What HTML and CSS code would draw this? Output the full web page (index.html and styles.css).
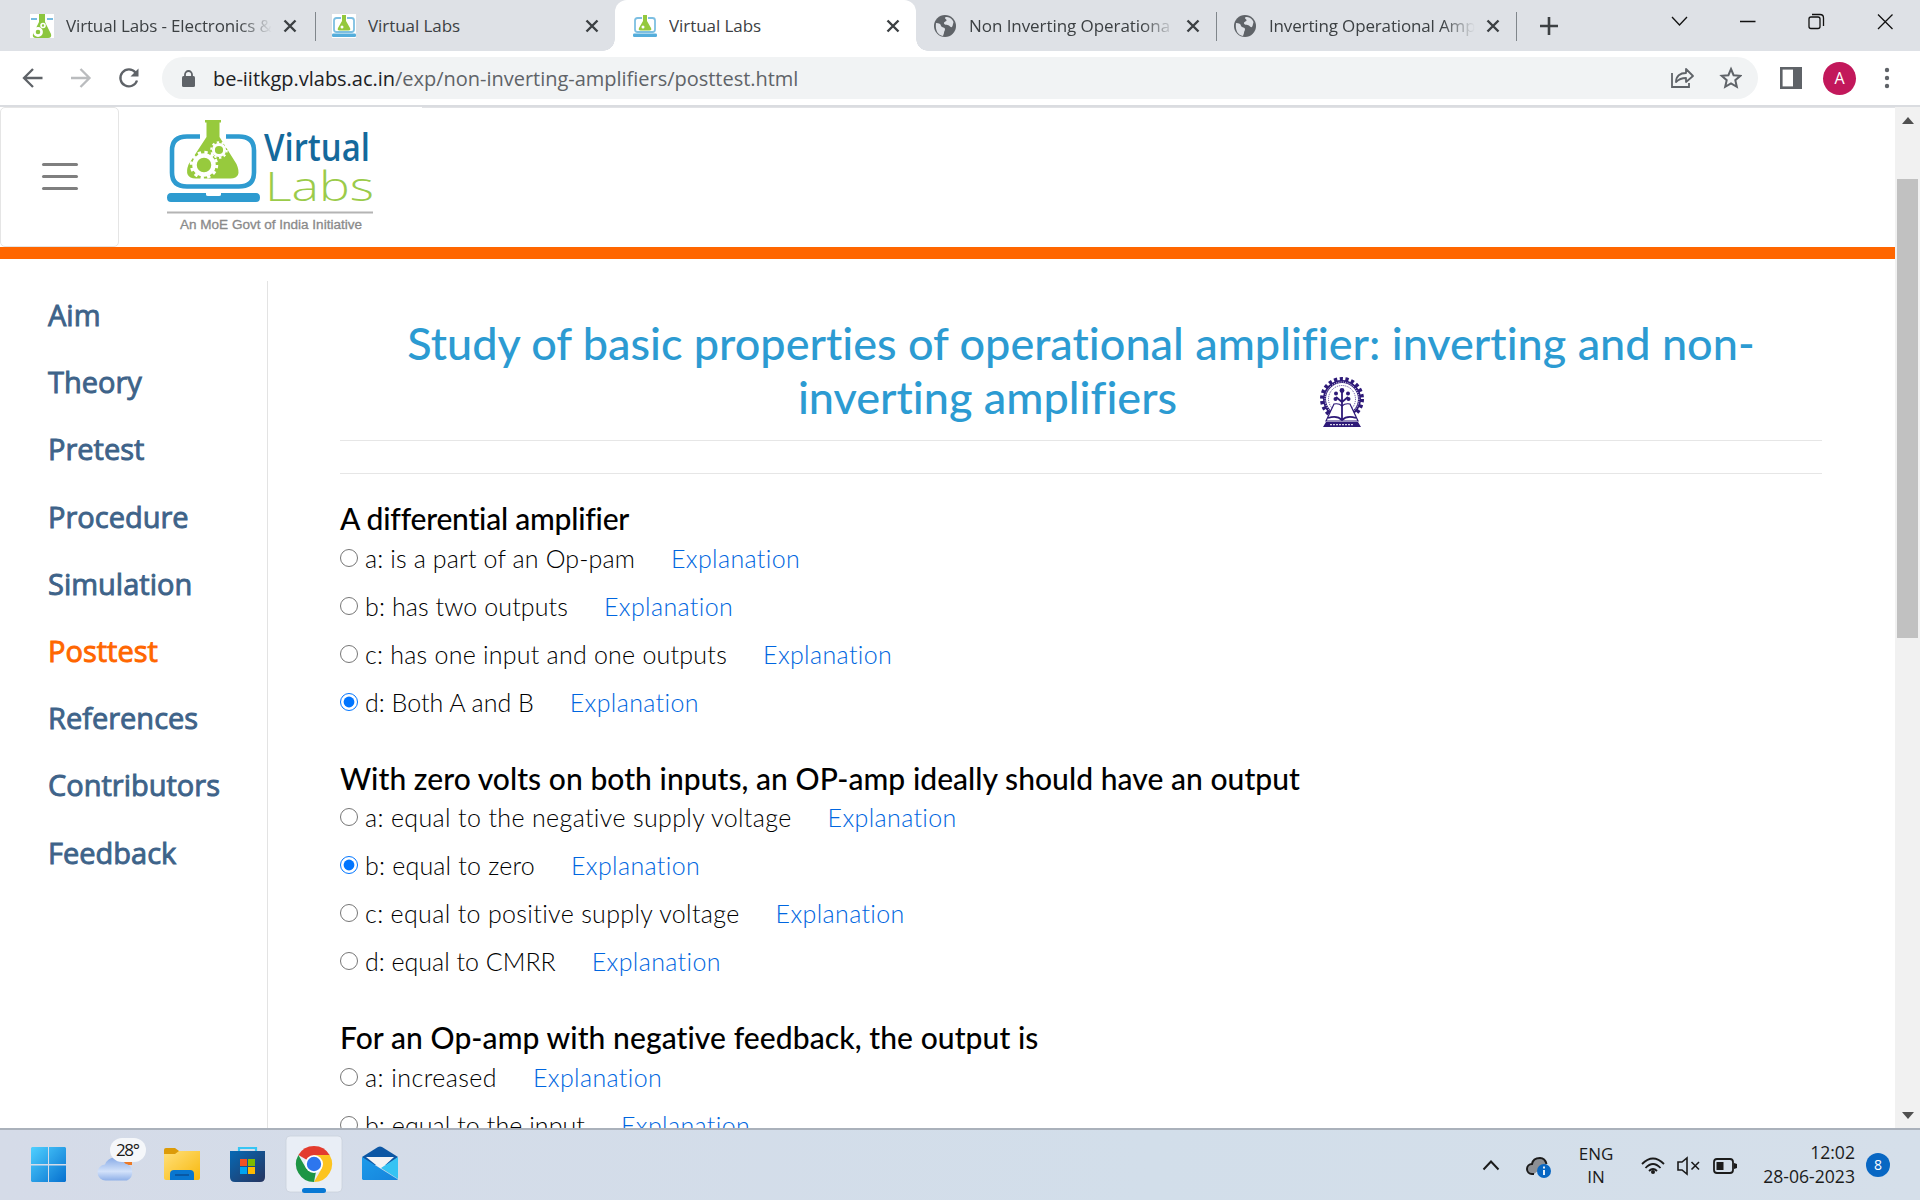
FILE: index.html
```html
<!DOCTYPE html>
<html lang="en">
<head>
<meta charset="utf-8">
<title>Virtual Labs</title>
<link rel="stylesheet" href="styles.css">
</head>
<body>
<svg class="defs" width="0" height="0">
  <symbol id="x" viewBox="0 0 14 14"><path d="M1.500 1.500l11 11M12.500 1.500l-11 11" stroke="#3c4043" stroke-width="2.400" fill="none"/></symbol>
  <symbol id="globe" viewBox="0 0 24 24"><circle cx="12" cy="12" r="11" fill="#5f6368"/><path d="M3 9c3 0 5 1 5 3 1 2 4 1 4 3s-1 2-1 4l-1 3C5 21 2 17 3 9zM12 3.500c4-1.500 7 1.500 8.500 4.500l-1 4c-1 2-2 1-3 0-1-1.500-5-.5-5.500-2.500s3-2 2.500-3.500-2-1-1.500-2.500z" fill="#dee1e6"/></symbol>
  <symbol id="flask" viewBox="0 0 24 24"><rect width="24" height="24" fill="#fff"/><path d="M1 5h6M17 5h6" stroke="#4aa5d6" stroke-width="1.500"/><path d="M9 0h6v8l6 12q1 4-3 4H6q-4 0-3-4L9 8z" fill="#8cc63f"/><circle cx="8" cy="18" r="3.600" fill="#8cc63f" stroke="#fff" stroke-width="2.600"/><circle cx="13" cy="11.500" r="2" fill="#8cc63f" stroke="#fff" stroke-width="1.600"/></symbol>
  <symbol id="vl" viewBox="0 0 24 24"><rect width="24" height="24" fill="#fff"/><path d="M9 4H4.500Q2 4 2 6.500v9Q2 18 4.500 18h15q2.500 0 2.500-2.500v-9Q22 4 19.500 4H15" fill="none" stroke="#7dbfe2" stroke-width="1.800"/><path d="M10 1h4v6l4 7q1 2.500-1.500 2.500h-9Q5 16.500 6 14l4-7z" fill="#94c83d"/><circle cx="10" cy="13" r="1.500" fill="#fff"/><rect x="0" y="19.500" width="24" height="3.500" rx="1.200" fill="#54addb"/></symbol>
</svg>

<header class="tabs">
  <div class="tab first"><svg class="fav"><use href="#flask"/></svg><span class="tt fade">Virtual Labs - Electronics &amp;</span><svg class="cl"><use href="#x"/></svg></div>
  <div class="tab second"><svg class="fav"><use href="#vl"/></svg><span class="tt">Virtual Labs</span><svg class="cl"><use href="#x"/></svg></div>
  <div class="tab active"><svg class="fav"><use href="#vl"/></svg><span class="tt">Virtual Labs</span><svg class="cl"><use href="#x"/></svg></div>
  <div class="tab fourth"><svg class="fav"><use href="#globe"/></svg><span class="tt fade">Non Inverting Operationa</span><svg class="cl"><use href="#x"/></svg></div>
  <div class="tab fifth"><svg class="fav"><use href="#globe"/></svg><span class="tt fade">Inverting Operational Amp</span><svg class="cl"><use href="#x"/></svg></div>
  <svg class="plus" viewBox="0 0 18 18"><path d="M9 0v18M0 9h18" stroke="#3c4043" stroke-width="2.600"/></svg>
  <svg class="win" viewBox="0 0 240 40" fill="none" stroke="#111" stroke-width="1.300"><path d="M12 17l7.500 8 7.500-8M80 21.500h15.500M218 14.500l14.500 14.500M232.500 14.500l-14.500 14.500"/><rect x="149" y="17" width="11" height="11.500" rx="2"/><path d="M152 14.500h8q3.500 0 3.500 3.500v8"/></svg>
</header>

<div class="toolbar">
  <svg class="nav" viewBox="0 0 130 26" fill="none" stroke="#5f6368" stroke-width="2.300"><path d="M22.500 13H4.500M13 4L4 13l9 9"/><path d="M51 13h18M60.500 4l9 9-9 9" stroke="#babcbe"/><path d="M115.500 7.500a8.500 8.500 0 1 0 1.500 8"/><path d="M118.500 3.500v8h-8z" fill="#5f6368" stroke="none"/></svg>
  <div class="omni">
    <svg class="lock" viewBox="0 0 13 17"><rect x="0" y="6" width="13" height="11" rx="1.500" fill="#5f6368"/><path d="M3 7V4.500a3.500 3.500 0 0 1 7 0V7" fill="none" stroke="#5f6368" stroke-width="1.800"/></svg>
    <span class="url"><b>be-iitkgp.vlabs.ac.in</b>/exp/non-inverting-amplifiers/posttest.html</span>
    <svg class="oi" viewBox="0 0 72 24" fill="none" stroke="#5f6368" stroke-width="1.800"><path d="M2 7v14h17v-4"/><path d="M6 16c0-6 4-9 10-9V3l7 7-7 6v-4c-4 0-7 1-10 4z" stroke-linejoin="round"/><path d="M61 3l2.600 6.200 6.700.6-5 4.400 1.500 6.600-5.800-3.500-5.800 3.500 1.500-6.600-5-4.400 6.700-.6z" stroke-width="2"/></svg>
  </div>
  <svg class="panel" viewBox="0 0 22 22"><rect x="1.300" y="1.300" width="19.400" height="19.400" fill="#fff" stroke="#5f6368" stroke-width="2.600"/><rect x="13" y="0" width="9" height="22" fill="#5f6368"/></svg>
  <div class="ava">A</div>
  <svg class="dots" viewBox="0 0 6 22" fill="#5f6368"><circle cx="3" cy="3" r="2.200"/><circle cx="3" cy="11" r="2.200"/><circle cx="3" cy="19" r="2.200"/></svg>
</div>

<div class="view">
  <div class="page">
    <div class="head">
      <div class="burger"><span></span><span></span><span></span></div>
      <svg class="logo" viewBox="160 108 220 130">
        <path d="M200 136.500h-13q-15 0-15 14v22q0 14 15 14h52q15 0 15-14v-22q0-14-15-14h-13" fill="none" stroke="#2e9bd0" stroke-width="4.600"/>
        <path d="M205 120h16v2.500h-1.500V137l17 27q6 14-6 14.500h-35q-12-.5-7-14l18-27.500v-14.500H205z" fill="#97ca3d"/>
        <circle cx="204" cy="165" r="9.500" fill="none" stroke="#fff" stroke-width="4.500"/><circle cx="204" cy="165" r="12.700" fill="none" stroke="#fff" stroke-width="3" stroke-dasharray="3.300 3.350"/>
        <circle cx="219" cy="150" r="5.600" fill="none" stroke="#fff" stroke-width="3"/><circle cx="219" cy="150" r="7.800" fill="none" stroke="#fff" stroke-width="2" stroke-dasharray="2.400 2.500"/>
        <path d="M171 193h35v1.500q0 1.500 2 1.500h11q2 0 2-1.500V193h35q4 0 4 4.500t-4 4.500h-85q-4 0-4-4.500t4-4.500z" fill="#2e9bd0"/>
        <text x="264" y="160.500" textLength="106" lengthAdjust="spacingAndGlyphs" class="lv">Virtual</text>
        <text x="265" y="201" textLength="109" lengthAdjust="spacingAndGlyphs" class="ll">Labs</text>
        <path d="M167 212.500h206" stroke="#b4b4b4" stroke-width="2"/>
        <text x="180" y="228.500" textLength="182" lengthAdjust="spacingAndGlyphs" class="lm">An MoE Govt of India Initiative</text>
      </svg>
      <div class="rule"></div>
    </div>
    <div class="body">
      <nav class="side">
        <a>Aim</a><a>Theory</a><a>Pretest</a><a>Procedure</a><a>Simulation</a><a class="on">Posttest</a><a>References</a><a>Contributors</a><a>Feedback</a>
      </nav>
      <main>
        <h1><span class="l">Study of basic properties of operational amplifier: inverting and non-</span><span class="l"><span>inverting amplifiers</span>
          <svg class="emb" viewBox="0 0 44 50" fill="none" stroke="#2e1a78"><circle cx="22" cy="22" r="20" stroke-width="4" stroke-dasharray="3.200 2.510"/><circle cx="22" cy="22" r="17.500" stroke-width="3"/><circle cx="22" cy="22" r="17" stroke="#fff" stroke-width="1" stroke-dasharray="1 1.300"/><circle cx="22" cy="22" r="13.500" stroke-width=".8" stroke-dasharray="1 1"/><path d="M6 44l8-17q5-1 8 2 3-3 8-2l8 17z" fill="#fff" stroke-width="1.200"/><path d="M22 42V15M22 25l-6-5M22 25l6-5M8 41q9-3 14 2 5-5 14-2" stroke-width="1.800"/><g fill="#2e1a78" stroke="none"><circle cx="22" cy="13.500" r="2.400"/><circle cx="16" cy="16.500" r="2"/><circle cx="28" cy="16.500" r="2"/><circle cx="15.500" cy="22" r="2"/><circle cx="28.500" cy="22" r="2"/><path d="M6 45h32l3 5H3z"/></g><path d="M10 47.700h24" stroke="#fff" stroke-dasharray="2 1"/></svg></span></h1>
        <hr><hr class="h2">
        <section><h2 style="letter-spacing:-.22px">A differential amplifier</h2>
          <label><input type="radio"><span style="letter-spacing:.135px">a: is a part of an Op-pam</span><a>Explanation</a></label>
          <label><input type="radio"><span style="letter-spacing:.108px">b: has two outputs</span><a>Explanation</a></label>
          <label><input type="radio"><span style="letter-spacing:.236px">c: has one input and one outputs</span><a>Explanation</a></label>
          <label><input type="radio" checked><span>d: Both A and B</span><a>Explanation</a></label></section>
        <section><h2 style="letter-spacing:.051px">With zero volts on both inputs, an OP-amp ideally should have an output</h2>
          <label><input type="radio"><span style="letter-spacing:.36px">a: equal to the negative supply voltage</span><a>Explanation</a></label>
          <label><input type="radio" checked><span style="letter-spacing:.203px">b: equal to zero</span><a>Explanation</a></label>
          <label><input type="radio"><span style="letter-spacing:.345px">c: equal to positive supply voltage</span><a>Explanation</a></label>
          <label><input type="radio"><span>d: equal to CMRR</span><a>Explanation</a></label></section>
        <section><h2 style="letter-spacing:.076px">For an Op-amp with negative feedback, the output is</h2>
          <label><input type="radio"><span style="letter-spacing:.441px">a: increased</span><a>Explanation</a></label>
          <label><input type="radio"><span style="letter-spacing:.08px">b: equal to the input</span><a>Explanation</a></label></section>
      </main>
    </div>
  </div>
  <div class="scroll"><i class="up"></i><div class="thumb"></div><i class="down"></i></div>
</div>

<footer class="task">
  <svg class="apps" viewBox="0 1130 420 70">
    <defs>
      <linearGradient id="w" x1="0" y1="0" x2="1" y2="1"><stop offset="0" stop-color="#4fd0ff"/><stop offset="1" stop-color="#0670cf"/></linearGradient>
      <linearGradient id="c" x1="0" y1="0" x2="0" y2="1"><stop offset="0" stop-color="#88abe6"/><stop offset=".6" stop-color="#d3e2fa"/><stop offset="1" stop-color="#8fb0e8"/></linearGradient>
      <linearGradient id="f" x1="0" y1="0" x2="1" y2="1"><stop offset="0" stop-color="#ffe07a"/><stop offset="1" stop-color="#f8b80d"/></linearGradient>
      <linearGradient id="s" x1="0" y1="0" x2="1" y2="1"><stop offset="0" stop-color="#0669b5"/><stop offset="1" stop-color="#26345f"/></linearGradient>
      <linearGradient id="l" x1="0" y1="0" x2="1" y2="1"><stop offset="0" stop-color="#1d9bea"/><stop offset="1" stop-color="#1684dc"/></linearGradient>
    </defs>
    <path d="M32 1147h16v17H31v-16zM49 1147h16l1 1v16H49zM31 1165.500h17v16.500H32l-1-1zM49 1165.500h17v15.500l-1 1H49z" fill="url(#w)"/>
    <path d="M118 1158h14v7h-6z" fill="#ec7a26"/><path d="M106 1180.500a8 8 0 0 1-1-16 11 11 0 0 1 20-1 9 9 0 0 1 2 17z" fill="url(#c)"/>
    <rect x="110" y="1138" width="36" height="24" rx="12" fill="#f5f7fa"/><text x="116" y="1156" textLength="24" class="deg">28°</text>
    <path d="M164 1150q0-2 2-2h9l4 3v7h-15z" fill="#dc9b08"/><path d="M164 1154h11l4-3h21v27q0 2-2 2h-32q-2 0-2-2z" fill="url(#f)"/><path d="M170 1180v-6q0-4 4-4h16q4 0 4 4v6z" fill="#0876d0"/><path d="M175 1175h14" stroke="#084f96" stroke-width="1.500"/>
    <path d="M239 1153v-5h17v5" fill="none" stroke="#36c5f4" stroke-width="2.200"/><path d="M230 1151h35v26q0 5-5 5h-25q-5 0-5-5z" fill="url(#s)"/><path d="M240 1159h7v7h-7z" fill="#f25022"/><path d="M248 1159h7v7h-7z" fill="#7fba00"/><path d="M240 1167h7v7h-7z" fill="#00a4ef"/><path d="M248 1167h7v7h-7z" fill="#ffb900"/>
    <rect x="286" y="1136" width="56" height="56" rx="4" fill="#e9eef6" stroke="#c9d1dc" stroke-width=".8"/>
    <path d="M314 1164L298.400 1155A18 18 0 0 1 329.600 1155z" fill="#e33b2e"/><path d="M314 1155h15.600A18 18 0 0 1 314 1182l8-14z" fill="#fcc420"/><path d="M298.400 1155l7.800 13.500 9.800 3-2 10.500a18 18 0 0 1-15.600-27z" fill="#1e9545"/><circle cx="314" cy="1164" r="9" fill="#fff"/><circle cx="314" cy="1164" r="7.200" fill="#2d76ee"/>
    <rect x="302" y="1188" width="24" height="5" rx="2.500" fill="#0878d4"/>
    <path d="M362 1157l16-10q2-1 4 0l16 10-9 8h-18z" fill="#0d57a4"/><path d="M366 1157h28l-13 12z" fill="#f3f3f5"/><path d="M398 1157v22l-17-11z" fill="#35c3f3"/><path d="M362 1157l36 22.500-1 .5h-34l-1-1z" fill="url(#l)"/>
  </svg>
  <div class="grow"></div>
  <svg class="t1" viewBox="1480 1145 72 36" fill="none" stroke="#1b1b1b" stroke-width="2"><path d="M1483.500 1167.500l7.500-8 7.500 8"/><path d="M1534 1172h-2a5 5 0 0 1 0-10q1-6 8-6 5 0 6.500 6" fill="#8c8f94"/><circle cx="1544" cy="1169" r="7" fill="#0867c3" stroke="none"/><path d="M1544 1168v5M1544 1164.500v2" stroke="#fff" stroke-width="1.800"/></svg>
  <div class="lang">ENG<br>IN</div>
  <svg class="t2" viewBox="1640 1150 100 26" fill="none" stroke="#1b1b1b" stroke-width="1.800"><path d="M1642 1162q11-11 22 0M1645.500 1166q7.500-8 15 0M1649 1169q4-4 8 0"/><circle cx="1653" cy="1170" r="2" fill="#1b1b1b" stroke="none"/><path d="M1678 1160h4l5-4v16l-5-4h-4zM1691.500 1160l7.500 7.500M1699 1160l-7.500 7.500" stroke-width="1.600"/><rect x="1714" y="1157" width="19" height="14" rx="3"/><path d="M1716.500 1160h7v8h-7zM1734 1161l3 1v4l-3 1z" fill="#1b1b1b" stroke="none"/></svg>
  <div class="clock">12:02<br>28-06-2023</div>
  <div class="cnt">8</div>
</footer>
</body>
</html>
```
FILE: styles.css
```css
*{box-sizing:border-box}
body{margin:0;width:1920px;height:1200px;overflow:hidden;display:flex;flex-direction:column;background:#fff;font-family:"Open Sans","Noto Sans",sans-serif}
.defs{position:absolute}
svg{display:block;flex:none}
.tabs{height:51px;background:#dee1e6;display:flex;align-items:center;flex:none}
.tab{display:flex;align-items:center;height:51px;position:relative;flex:none}
.first{width:316px;padding-left:30px}
.second{width:299px;padding-left:16px}
.active{width:301px;padding-left:18px;background:#fff;border-radius:12px 12px 0 0}
.active::before,.active::after{content:"";position:absolute;bottom:0;width:12px;height:12px}
.active::before{left:-12px;background:radial-gradient(circle at 0 0,transparent 11.5px,#fff 12px)}
.active::after{right:-12px;background:radial-gradient(circle at 100% 0,transparent 11.5px,#fff 12px)}
.fourth{width:301px;padding-left:17px}
.fifth{width:300px;padding-left:16px}
.first::after,.fourth::after,.fifth::after{content:"";position:absolute;right:0;top:12px;width:1px;height:29px;background:#80868b}
.fav{width:24px;height:24px}
.tt{margin-left:12px;width:206px;font-size:17px;line-height:24px;letter-spacing:-.06px;color:#3c4043;white-space:nowrap;overflow:hidden}
.first .tt{letter-spacing:-.14px}
.fifth .tt{letter-spacing:-.15px}
.fade{-webkit-mask-image:linear-gradient(90deg,#000 84%,transparent);mask-image:linear-gradient(90deg,#000 84%,transparent)}
.cl{width:14px;height:14px;margin-left:11px}
.plus{width:18px;height:18px;margin-left:23px}
.win{width:240px;height:40px;margin:-11px 0 0 102px}
.toolbar{height:56px;border-bottom:2px solid #dadce0;display:flex;align-items:center;flex:none}
.nav{width:130px;height:26px;margin-left:20px}
.omni{width:1596px;height:42px;margin-left:12px;border-radius:21px;background:#f1f3f4;display:flex;align-items:center;flex:none}
.lock{width:13px;height:17px;margin-left:20px}
.url{margin-left:18px;width:1457px;font-size:20px;letter-spacing:-.02px;color:#5f6368;white-space:nowrap}
.url b{font-weight:400;color:#202124}
.oi{width:72px;height:24px}
.panel{width:22px;height:22px;margin-left:22px}
.ava{width:33px;height:33px;margin-left:21px;border-radius:50%;background:#c2185b;color:#fff;font-size:16px;line-height:33px;text-align:center}
.dots{width:6px;height:22px;margin-left:28px}
.view{height:1021px;display:flex;flex:none}
.page{width:1895px;overflow:hidden}
.head{height:152px;border-bottom:12px solid #f60;display:flex}
.burger{width:119px;height:140px;border:1px solid #e5e5e5;border-radius:5px;padding-bottom:2px;display:flex;flex-direction:column;align-items:center;justify-content:center;gap:9px}
.burger span{width:36px;height:3px;border-radius:2px;background:#7f7f7f}
.logo{width:220px;height:130px;margin:1px 0 0 41px}
.lv{font:600 37px "Open Sans",sans-serif;fill:#14699c}
.ll{font:300 40px "Open Sans",sans-serif;fill:#9bcb4a}
.lm{font:12.5px "Liberation Sans",sans-serif;fill:#8a8a8a;stroke:#8a8a8a;stroke-width:.3px}
.rule{flex:1;height:1px;margin-left:42px;background:#e1e2e5}
.body{display:flex;height:869px}
.side{width:268px;margin-top:22px;border-right:1px solid #e3e3e3;padding-left:48px;display:flex;flex-direction:column;flex:none}
.side a{height:67.2px;line-height:67.2px;font-size:29px;color:#3e6389;-webkit-text-stroke:.9px currentColor;white-space:nowrap}
.side .on{color:#f60}
main{width:1482px;margin-left:72px;padding-top:57px;font-family:Lato,"Open Sans",sans-serif;font-variant-ligatures:none}
h1{margin:0;height:107px;font-size:45px;line-height:54px;font-weight:500;color:#2c9bd2}
.l{display:flex;justify-content:center;height:54px;white-space:nowrap}
.emb{width:44px;height:50px;margin:7px 0 0 143px}
hr{border:0;height:1px;background:#e6e6e6;margin:17px 0 32px}
hr.h2{margin:0 0 26px}
section{height:259.5px}
h2{margin:0;height:33.5px;font-size:30px;line-height:36px;font-weight:500;color:#000;white-space:nowrap}
label{display:flex;align-items:center;height:48px;font-size:25px;font-weight:300;color:#000;white-space:nowrap}
label input{width:18px;height:18px;margin:0 7px 0 0;flex:none;accent-color:#0075ff}
label a{margin-left:36px;letter-spacing:.36px;color:#0066e0}
.scroll{width:25px;background:#f1f1f1;display:flex;flex-direction:column;align-items:center}
.up,.down{width:0;height:0;border:6px solid transparent}
.up{border-bottom-color:#505050;border-top:0;border-bottom-width:7px;margin-top:10px}
.thumb{width:21px;height:459px;margin-top:55px;background:#c1c1c1}
.down{border-top-color:#505050;border-bottom:0;border-top-width:7px;margin-top:474px}
.task{height:72px;border-top:2px solid #aab1bb;background:linear-gradient(90deg,#d5dbe8,#d2deea 60%,#d5dfea);display:flex;align-items:center;color:#1b1b1b;font-size:17px;line-height:23px}
.apps{width:420px;height:70px}
.deg{font:17px "Open Sans",sans-serif;fill:#1b1b1b}
.grow{flex:1}
.t1{width:72px;height:36px}
.lang{width:50px;margin-left:19px;margin-top:-1px;text-align:center}
.t2{width:100px;height:26px;margin-left:19px}
.clock{width:115px;margin-top:-2px;text-align:right;font-size:17.6px;line-height:24px}
.cnt{width:24px;height:24px;margin:0 30px 0 11px;border-radius:50%;background:#0867c3;color:#fff;font-size:14px;line-height:24px;text-align:center}
```
